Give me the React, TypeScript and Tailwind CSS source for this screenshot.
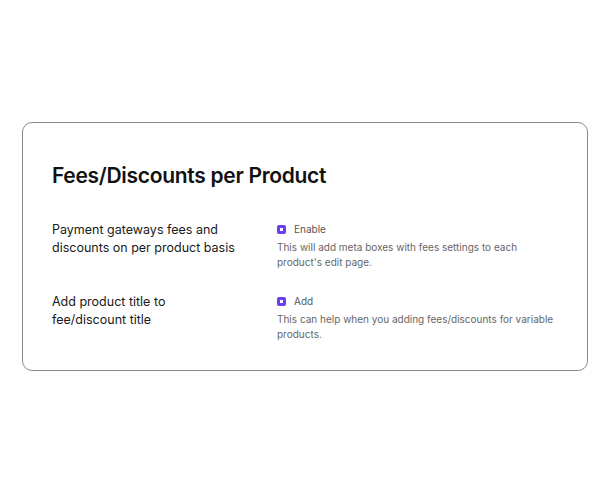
const rows = [
  {
    label: ["Payment gateways fees and", "discounts on per product basis"],
    option: "Enable",
    help: "This will add meta boxes with fees settings to each product's edit page.",
  },
  {
    label: ["Add product title to", "fee/discount title"],
    option: "Add",
    help: "This can help when you adding fees/discounts for variable products.",
  },
];

const Checkbox = () => (
  <span className="flex h-[9px] w-[9px] shrink-0 items-center justify-center rounded-[2px] bg-[#6a3df2]">
    <span className="h-[3px] w-[3px] bg-white" />
  </span>
);

export default function App() {
  return (
    <div className="min-h-screen bg-white px-[22px] pt-[122px] font-['Inter',sans-serif] text-[#111]">
      <div className="h-[249px] rounded-[10px] border border-[#8a8a8a] pl-[29px] pr-[30px] pt-[40px]">
        <h1 className="text-[21px] font-semibold leading-[26px] tracking-[-0.3px]">
          Fees/Discounts per Product
        </h1>
        <div className="mt-[32px] flex flex-col gap-[23px]">
          {rows.map((row) => (
            <div key={row.option} className="flex">
              <p className="w-[225px] shrink-0 text-[12.5px] leading-[18px] text-[#1a1a1a]">
                {row.label[0]}
                <br />
                {row.label[1]}
              </p>
              <div className="flex flex-col pt-[1px]">
                <label className="flex items-center gap-[8px] text-[10px] leading-[14px] text-[#555]">
                  <Checkbox />
                  {row.option}
                </label>
                <p className="mt-[4px] max-w-[280px] text-[10px] leading-[15px] text-[#666]">
                  {row.help}
                </p>
              </div>
            </div>
          ))}
        </div>
      </div>
    </div>
  );
}
